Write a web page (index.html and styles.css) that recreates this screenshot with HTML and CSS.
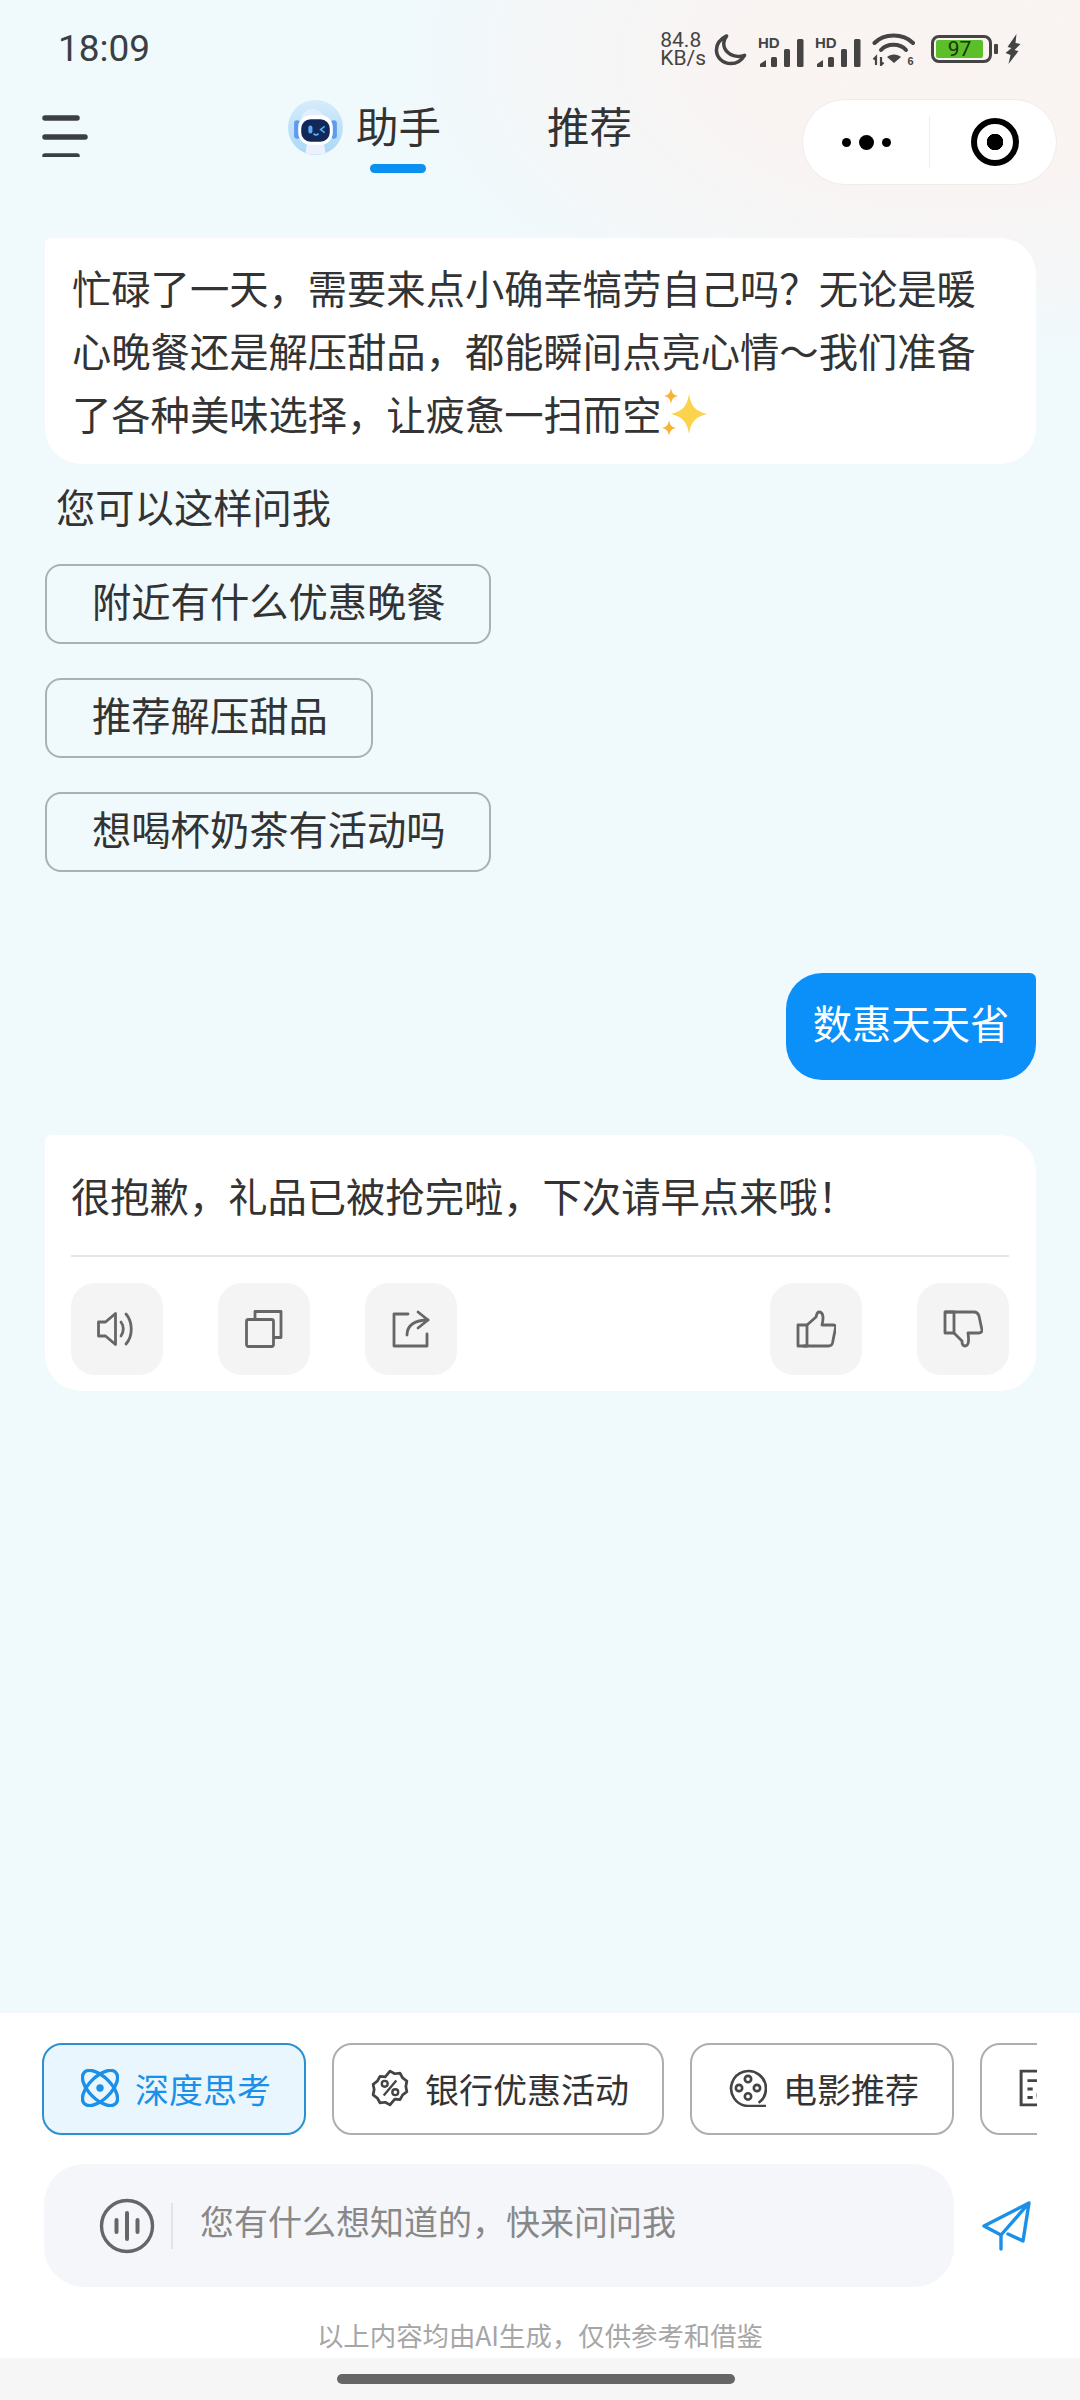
FILE: index.html
```html
<!DOCTYPE html>
<html lang="zh-CN">
<head>
<meta charset="utf-8">
<title>助手</title>
<link rel="stylesheet" href="styles.css">
</head>
<body>
<div class="page">
  <div class="status">
    <span class="time">18:09</span>
    <div class="status-icons">
      <span class="speed"><span>84.8</span><span>KB/s</span></span>
      <svg class="ic-moon" viewBox="0 0 34 34"><path d="M13 3C7 6 2.500 11 2.500 17.500 2.500 25.500 9.500 31.500 17.500 31.500c6 0 11-3.500 14-8.500-2 .8-4 1.200-6 1.200C16.500 24.200 10 18 10 10.500c0-2.500 1.200-5 3-7.500z" fill="none" stroke="#444" stroke-width="3.600" stroke-linejoin="round"/></svg>
      <svg class="ic-sig" viewBox="0 -6 46 40"><text x="0" y="11" class="hd">HD</text><path d="M2 30v-3l6-4v7z"/><rect x="13" y="20" width="6" height="10" rx="1.500"/><rect x="26" y="12" width="6" height="18" rx="1.500"/><rect x="39" y="2" width="6.500" height="28" rx="1.500"/></svg>
      <svg class="ic-sig" viewBox="0 -6 46 40"><text x="0" y="11" class="hd">HD</text><path d="M2 30v-3l6-4v7z"/><rect x="13" y="20" width="6" height="10" rx="1.500"/><rect x="26" y="12" width="6" height="18" rx="1.500"/><rect x="39" y="2" width="6.500" height="28" rx="1.500"/></svg>
      <svg class="ic-wifi" viewBox="0 0 44 34"><g fill="none" stroke="#444" stroke-width="4" stroke-linecap="round"><path d="M2.500 11C12 1 31 1 41 11"/><path d="M9 18C15 11 28 11 34 18"/></g><path d="M22 31l-7-6c3.500-3.500 10.500-3.500 14 0z" fill="#444"/><path d="M4 33v-8l-2.500 2.500M9 25v8l2.500-2.500" fill="none" stroke="#444" stroke-width="2.200"/><text x="35.500" y="33" class="six">6</text></svg>
      <div class="battery"><div class="bat-body"><span class="bat-fill">97</span></div><span class="bat-tip"></span></div>
      <svg class="ic-bolt" viewBox="0 0 16 30"><path d="M11 0L2 13l4 1-6 5 5 2-2 9 10-13-4-1 6-6-5-1z" fill="#444"/></svg>
    </div>
  </div>

  <div class="nav">
    <svg class="ic-menu" viewBox="0 0 46 42"><g stroke="#3a3f44" stroke-width="5.500" stroke-linecap="round"><path d="M3 3h32M3 22h40M3 41h32"/></g></svg>
    <div class="tabs">
      <div class="tab tab-active">
        <svg class="avatar" viewBox="0 0 54 54">
          <defs><linearGradient id="av" x1="0" y1="0" x2="0" y2="1"><stop offset="0" stop-color="#d6ecfb"/><stop offset="1" stop-color="#a9d8f8"/></linearGradient></defs>
          <circle cx="27" cy="27" r="27" fill="url(#av)"/>
          <path d="M13 17c2-6 8-9 13-8 4 1 8 4 10 7-6-1-15-1-23 1z" fill="#e4eefd"/>
          <rect x="6" y="20" width="6" height="18" rx="3" fill="#5e9bf0"/>
          <rect x="42" y="20" width="6" height="18" rx="3" fill="#5e9bf0"/>
          <path d="M19 42h16l2 10c-6 2-14 2-20 0z" fill="#eef1fd"/>
          <rect x="10" y="15" width="34" height="29" rx="12" fill="#fff"/>
          <rect x="13" y="19" width="28" height="22" rx="9" fill="#12285a"/>
          <rect x="20" y="25" width="4" height="8" rx="2" fill="#56b0f5"/>
          <path d="M25 33q2.500 2.500 5 0M36 26l-4 3 4 3" fill="none" stroke="#56b0f5" stroke-width="1.500"/>
        </svg>
        <span class="tab-label">助手</span>
        <span class="tab-line"></span>
      </div>
      <div class="tab"><span class="tab-label">推荐</span></div>
    </div>
    <div class="capsule">
      <div class="cap-dots"><i class="dot"></i><i class="dot dot-big"></i><i class="dot"></i></div>
      <div class="cap-target"><i class="target-in"></i></div>
    </div>
  </div>

  <div class="chat">
    <div class="card card-intro">
      <p class="intro">忙碌了一天，需要来点小确幸犒劳自己吗？无论是暖<br>心晚餐还是解压甜品，都能瞬间点亮心情～我们准备<br>了各种美味选择，让疲惫一扫而空<svg class="sparkle" viewBox="0 0 48 50"><path d="M28 6c2 12 6 17 18 20-12 3-16 8-18 20-2-12-6-17-18-20 12-3 16-8 18-20z" fill="#fcd34d"/><path d="M10 0c1 5 2 7 7 8-5 1-6 3-7 8-1-5-2-7-7-8 5-1 6-3 7-8zM8 32c1 5 2 7 7 8-5 1-6 3-7 8-1-5-2-7-7-8 5-1 6-3 7-8z" fill="#f9b233"/></svg></p>
    </div>
    <div class="hint">您可以这样问我</div>
    <div class="suggests">
      <div class="suggest">附近有什么优惠晚餐</div>
      <div class="suggest">推荐解压甜品</div>
      <div class="suggest">想喝杯奶茶有活动吗</div>
    </div>
    <div class="user-row"><div class="bubble">数惠天天省</div></div>
    <div class="card card-answer">
      <p class="answer">很抱歉，礼品已被抢完啦，下次请早点来哦！</p>
      <div class="actions">
        <div class="act-group">
          <div class="act"><svg viewBox="0 0 40 36"><g fill="none" stroke="#666" stroke-width="2.800" stroke-linejoin="round" stroke-linecap="round"><path d="M1.500 11h7l10-8.500v31l-10-8.500h-7z"/><path d="M24 11c3 4 3 10 0 14"/><path d="M29 3c7 8 7 22 0 30"/></g></svg></div>
          <div class="act"><svg viewBox="0 0 38 38"><g fill="none" stroke="#666" stroke-width="2.800" stroke-linejoin="round"><rect x="1.500" y="9.500" width="27" height="27" rx="2"/><path d="M10 9.500V1.500h26v26h-7.500"/></g></svg></div>
          <div class="act"><svg viewBox="0 0 38 38"><g fill="none" stroke="#666" stroke-width="2.800" stroke-linecap="round" stroke-linejoin="round"><path d="M16 4H2v32h33V24"/><path d="M15 25C15 15 23 10 36 10"/><path d="M26 2l10 8-10 8"/></g></svg></div>
        </div>
        <div class="act-group">
          <div class="act"><svg viewBox="0 0 40 38"><g fill="none" stroke="#666" stroke-width="2.800" stroke-linejoin="round"><path d="M2 15h9v21H2z"/><path d="M11 15l9-8c1-3 1-5 3-5 4 0 5 5 3 13h11c2 0 3 1 2.500 3l-3 15c-.5 2-2 3-4 3H7"/></g></svg></div>
          <div class="act"><svg viewBox="0 0 40 38"><g fill="none" stroke="#666" stroke-width="2.800" stroke-linejoin="round"><path d="M2 2h9v21H2z"/><path d="M2 2h29c3 0 4 1 5 4l3 14c0 2-1 3-3 3H25c1 7 1 13-3 13-3 0-3-3-3-5l-8-8"/></g></svg></div>
        </div>
      </div>
    </div>
  </div>

  <div class="composer">
    <div class="chips">
      <div class="chip chip-on"><svg class="chip-ic" viewBox="0 0 36 36"><g fill="none" stroke="#1a90e8" stroke-width="3.200"><ellipse cx="18" cy="18" rx="21" ry="10.500" transform="rotate(45 18 18)"/><ellipse cx="18" cy="18" rx="21" ry="10.500" transform="rotate(-45 18 18)"/></g><circle cx="18" cy="18" r="3.500" fill="#1a90e8"/></svg><span>深度思考</span></div>
      <div class="chip"><svg class="chip-ic" viewBox="0 0 36 36"><path d="M18 2l4.500 2.500 5-.5 2.500 4.500 4 3-1 5 1 5-4 3-2.500 4.500-5-.5L18 34l-4.500-2.500-5 .5L6 27.500l-4-3 1-5-1-5 4-3L8.500 7l5 .5z" fill="none" stroke="#444" stroke-width="2.600" stroke-linejoin="round"/><g fill="none" stroke="#444" stroke-width="2.200"><circle cx="13" cy="14" r="2.800"/><circle cx="23" cy="22" r="2.800"/><path d="M24 11L12 25"/></g></svg><span>银行优惠活动</span></div>
      <div class="chip"><svg class="chip-ic" viewBox="0 0 36 36"><g fill="none" stroke="#444" stroke-width="2.500"><path d="M35 35H18A16.500 16.500 0 1 1 28 32"/><circle cx="18" cy="9.500" r="3"/><circle cx="18" cy="26" r="3"/><circle cx="9.500" cy="18" r="3"/><circle cx="26.500" cy="18" r="3"/></g></svg><span>电影推荐</span></div>
      <div class="chip chip-more"><svg class="chip-ic" viewBox="0 0 36 36"><g fill="none" stroke="#444" stroke-width="2.800"><path d="M26 34H2V2h30v14"/><path d="M8 11h12M8 19h5M8 27h5"/><circle cx="26" cy="25" r="8"/></g></svg></div>
    </div>
    <div class="input-row">
      <div class="input">
        <svg class="ic-voice" viewBox="0 0 56 56"><circle cx="28" cy="28" r="25.500" fill="none" stroke="#666" stroke-width="3.400"/><g stroke="#666" stroke-width="4" stroke-linecap="round"><path d="M17.500 22v12M28 15v26M38.500 22v12"/></g></svg>
        <span class="input-sep"></span>
        <span class="placeholder">您有什么想知道的，快来问问我</span>
      </div>
      <svg class="ic-send" viewBox="0 0 50 50"><g fill="none" stroke="#1a90e8" stroke-width="3.400" stroke-linejoin="round" stroke-linecap="round"><path d="M47 2L2 25l17 9L47 2 41 40l-15-7"/><path d="M19 34v14"/></g></svg>
    </div>
    <div class="disclaimer">以上内容均由AI生成，仅供参考和借鉴</div>
  </div>

  <div class="home"><span class="home-bar"></span></div>
</div>
</body>
</html>
```

FILE: styles.css
```css
* { box-sizing: border-box; }
html, body { margin: 0; padding: 0; }
body {
  font-family: "Noto Sans CJK SC", "Noto Sans", sans-serif;
  color: #333;
}
.page {
  width: 1080px;
  height: 2400px;
  display: flex;
  flex-direction: column;
  overflow: hidden;
  background:
    radial-gradient(560px 300px at 960px 60px, #faf3f1 0%, #f9f4f3 45%, rgba(249,244,243,0) 100%),
    #f0f9fc;
}

/* status bar */
.status {
  height: 90px;
  padding: 22px 58px 0 58px;
  display: flex;
  justify-content: space-between;
  align-items: flex-start;
}
.time {
  font-family: Roboto, sans-serif;
  font-size: 37px;
  line-height: 54px;
  color: #3a3f44;
}
.status-icons { display: flex; align-items: center; gap: 11px; height: 54px; }
.speed {
  display: flex;
  flex-direction: column;
  font-family: Roboto, sans-serif;
  font-size: 21px;
  line-height: 18px;
  color: #444;
  margin-right: -3px;
}
.ic-moon { width: 33px; height: 33px; }
.ic-sig { width: 46px; height: 40px; fill: #444; margin-top: 4px; }
.hd { font: 700 15px "Liberation Sans", sans-serif; fill: #444; }
.six { font: 700 11px "Liberation Sans", sans-serif; fill: #444; }
.ic-wifi { width: 44px; height: 34px; margin-right: 4px; }
.battery { display: flex; align-items: center; gap: 2px; margin-right: -4px; }
.bat-body {
  width: 61px;
  height: 28px;
  border: 3px solid #444;
  border-radius: 8px;
  padding: 2px;
  display: flex;
}
.bat-fill {
  width: 47px;
  background: #5bbf2a;
  border-radius: 2px;
  font: 400 21px/18px Roboto, sans-serif;
  color: #1c3312;
  text-align: center;
}
.bat-tip { width: 4px; height: 10px; background: #444; border-radius: 1px; }
.ic-bolt { width: 17px; height: 30px; }

/* nav */
.nav {
  height: 106px;
  padding-left: 42px;
  display: flex;
  align-items: flex-start;
}
.ic-menu { width: 46px; height: 42px; margin-top: 25px; flex: none; }
.tabs {
  margin-left: 200px;
  display: flex;
  gap: 106px;
  width: 514px;
}
.tab { position: relative; display: flex; align-items: center; gap: 13px; height: 74px; }
.avatar { width: 55px; height: 55px; }
.tab-label { font-size: 42.5px; line-height: 62px; margin-bottom: 4px; color: #333; }
.tab-line {
  position: absolute;
  left: 82px;
  top: 74px;
  width: 56px;
  height: 9px;
  border-radius: 5px;
  background: #0a90f0;
}
.capsule {
  width: 255px;
  height: 86px;
  margin-top: 9px;
  border: 1px solid #f1ecec;
  border-radius: 43px;
  background: #fff;
  display: flex;
  align-items: center;
  flex: none;
}
.cap-dots {
  width: 127px;
  height: 52px;
  border-right: 1px solid #eee;
  display: flex;
  align-items: center;
  justify-content: center;
  gap: 8px;
}
.dot { width: 9px; height: 9px; border-radius: 50%; background: #000; }
.dot-big { width: 15px; height: 15px; }
.cap-target { flex: 1; display: flex; justify-content: center; align-items: center; padding-left: 4px; }
.target-in {
  width: 48px;
  height: 48px;
  border: 6px solid #000;
  border-radius: 50%;
  background: radial-gradient(circle, #000 0 8px, #fff 8.5px);
}

/* chat */
.chat {
  flex: 1;
  padding: 42px 44px 0 45px;
  display: flex;
  flex-direction: column;
}
.card { background: #fff; border-radius: 6px 36px 36px 36px; }
.card-intro { height: 226px; padding: 17px 20px 0 27px; }
.intro { margin: 0; font-size: 39.3px; line-height: 63px; color: #333; white-space: nowrap; }
.sparkle { width: 48px; height: 50px; vertical-align: -8px; }
.hint { font-size: 39.3px; line-height: 60px; margin-top: 12px; padding-left: 11px; color: #333; }
.suggests { display: flex; flex-direction: column; align-items: flex-start; gap: 34px; margin-top: 28px; }
.suggest {
  height: 80px;
  padding: 0 43px 0 45px;
  border: 2px solid #aab1b6;
  border-radius: 16px;
  font-size: 39.3px;
  line-height: 68px;
  color: #333;
}
.user-row { display: flex; justify-content: flex-end; margin-top: 101px; }
.bubble {
  height: 107px;
  width: 250px;
  border-radius: 36px 6px 36px 36px;
  background: #0a90f8;
  color: #fff;
  font-size: 39.3px;
  line-height: 98px;
  text-align: center;
}
.card-answer { height: 256px; margin-top: 55px; padding: 30px 27px 0 26px; }
.answer {
  margin: 0;
  font-size: 39.3px;
  line-height: 60px;
  height: 92px;
  border-bottom: 2px solid #e6e6e6;
  color: #333;
  white-space: nowrap;
}
.actions { display: flex; justify-content: space-between; margin-top: 26px; }
.act-group { display: flex; gap: 55px; }
.act {
  width: 92px;
  height: 92px;
  border-radius: 24px;
  background: #f4f4f4;
  display: flex;
  align-items: center;
  justify-content: center;
}
.act svg { width: 40px; height: 38px; }

/* composer */
.composer { height: 345px; background: #fff; padding-top: 30px; }
.chips {
  width: 995px;
  margin-left: 42px;
  height: 92px;
  display: flex;
  gap: 26px;
  overflow: hidden;
}
.chip {
  flex: none;
  height: 92px;
  padding: 0 33px 2px 37px;
  border: 2px solid #aeaeae;
  border-radius: 20px;
  display: flex;
  align-items: center;
  gap: 16px;
  font-size: 34px;
  color: #333;
  background: #fff;
}
.chip-on { border-color: #2a90d0; background: #eaf6fe; color: #1a90e8; }
.chip-more { width: 200px; }
.chip-ic { width: 38px; height: 38px; flex: none; }
.input-row { display: flex; align-items: center; margin: 29px 0 0 44px; }
.input {
  width: 910px;
  height: 123px;
  border-radius: 40px;
  background: #f4f6fa;
  display: flex;
  align-items: center;
  padding-left: 55px;
}
.ic-voice { width: 56px; height: 56px; flex: none; }
.input-sep { width: 2px; height: 46px; background: #e2e3e6; margin-left: 16px; margin-right: 27px; }
.placeholder { font-size: 34px; color: #888; position: relative; top: -5px; }
.ic-send { width: 50px; height: 50px; margin-left: 28px; }
.disclaimer {
  margin-top: 28px;
  text-align: center;
  font-size: 26.4px;
  line-height: 40px;
  color: #a6a6a6;
}

/* home indicator */
.home { height: 42px; background: #f6f6f6; display: flex; justify-content: center; padding-top: 16px; }
.home-bar { width: 398px; height: 10px; border-radius: 5px; background: #666; margin-left: -8px; }
```
